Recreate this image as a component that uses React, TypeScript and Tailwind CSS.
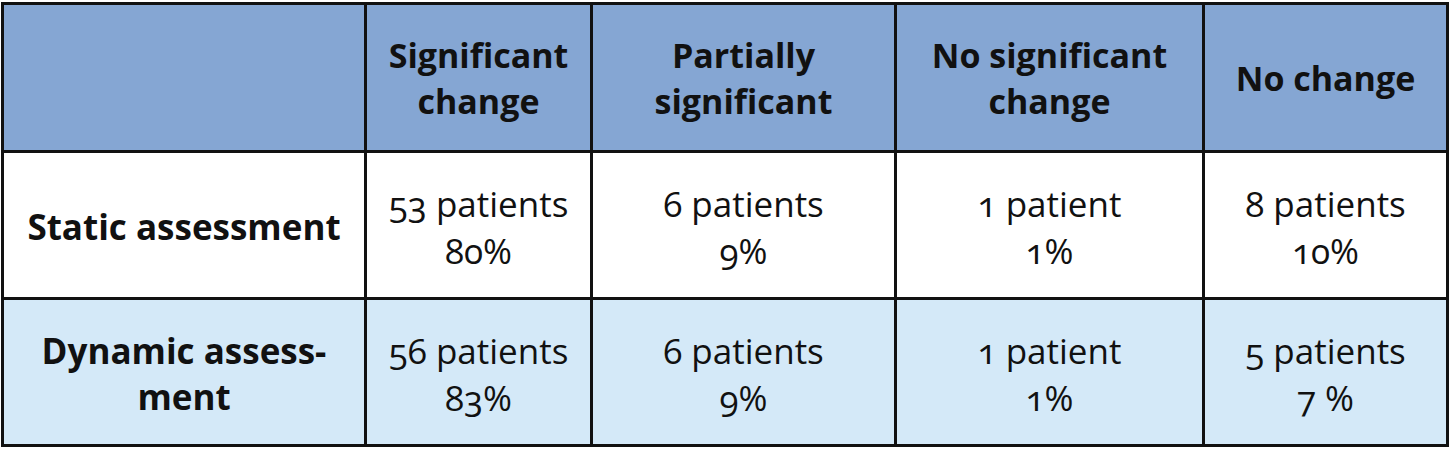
const headers = [
  ["Significant", "change"],
  ["Partially", "significant"],
  ["No significant", "change"],
  ["No change"],
];

const rows = [
  {
    label: ["Static assessment"],
    bg: "bg-white",
    cells: [
      ["53 patients", "80%"],
      ["6 patients", "9%"],
      ["1 patient", "1%"],
      ["8 patients", "10%"],
    ],
  },
  {
    label: ["Dynamic assess-", "ment"],
    bg: "bg-[#d4e9f8]",
    cells: [
      ["56 patients", "83%"],
      ["6 patients", "9%"],
      ["1 patient", "1%"],
      ["5 patients", "7 %"],
    ],
  },
];

function Lines({ lines }: { lines: string[] }) {
  return (
    <>
      {lines.map((l, i) => (
        <div key={i}>{l}</div>
      ))}
    </>
  );
}

export default function App() {
  return (
    <div className="min-h-screen bg-white pt-[2px] pl-[1px] font-['Open_Sans',sans-serif] text-[#111] oldstyle-nums">
      <div className="inline-grid grid-cols-[360px_223px_301px_305px_241px] grid-rows-[145px_144px_144px] gap-[3px] bg-[#111] p-[3px]">
        <div className="bg-[#85a6d3]" />
        {headers.map((h, i) => (
          <div
            key={i}
            className="flex flex-col items-center justify-center bg-[#85a6d3] text-center text-[34px] font-bold leading-[46px]"
          >
            <Lines lines={h} />
          </div>
        ))}
        {rows.map((r, ri) => (
          <div key={ri} className="contents">
            <div
              className={`flex flex-col items-center justify-center pt-[4px] text-center text-[35px] font-bold leading-[46px] ${r.bg}`}
            >
              <Lines lines={r.label} />
            </div>
            {r.cells.map((c, ci) => (
              <div
                key={ci}
                className={`flex flex-col items-center justify-center pt-[3px] text-center text-[35px] font-normal leading-[47px] ${r.bg}`}
              >
                <Lines lines={c} />
              </div>
            ))}
          </div>
        ))}
      </div>
    </div>
  );
}
